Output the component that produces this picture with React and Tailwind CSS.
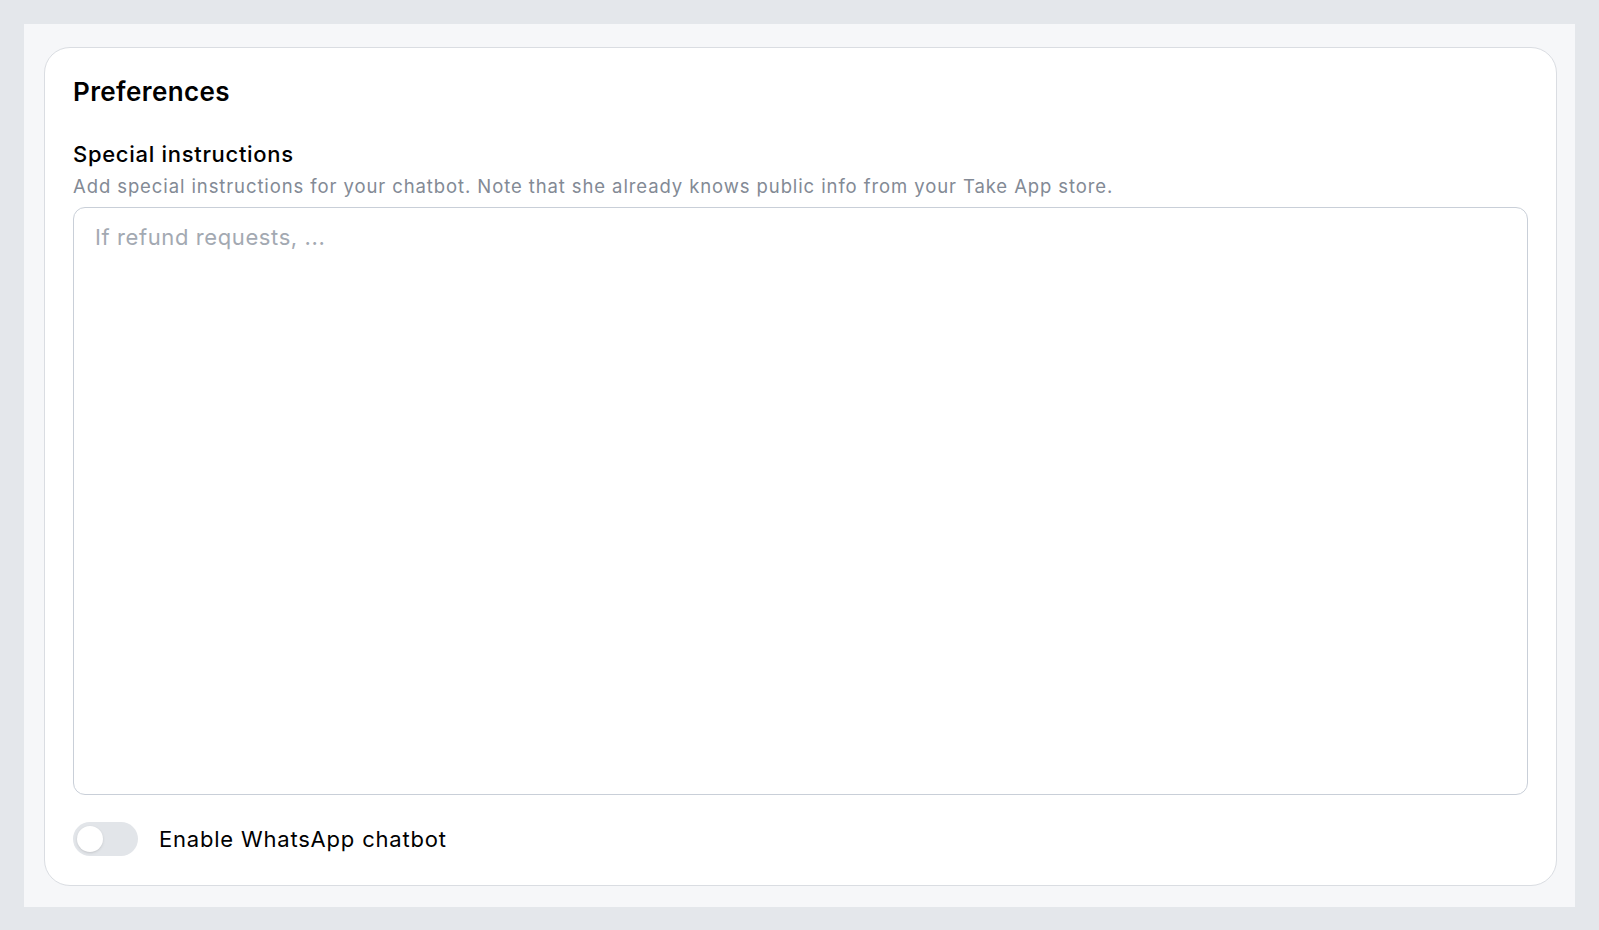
import { useState } from 'react';

function Toggle({ checked, onChange }) {
  return (
    <button
      type="button"
      role="switch"
      aria-checked={checked}
      onClick={() => onChange(!checked)}
      className={
        'relative inline-flex h-[34px] w-[65px] shrink-0 items-center rounded-full transition-colors ' +
        (checked ? 'bg-[#25d366]' : 'bg-[#e2e5e9]')
      }
    >
      <span
        className={
          'inline-block h-[26px] w-[26px] rounded-full bg-white shadow-sm transition-transform ' +
          (checked ? 'translate-x-[35px]' : 'translate-x-[4px]')
        }
      />
    </button>
  );
}

export default function App() {
  const [enabled, setEnabled] = useState(false);
  const [instructions, setInstructions] = useState('');

  return (
    <div className="min-h-screen bg-[#e4e7eb] p-6 font-['Inter',sans-serif]">
      <div className="bg-[#f6f7f9] pt-[23px] pb-[21px] pl-5 pr-[18px]">
        {/* Preferences card */}
        <section className="rounded-[26px] border border-[#dadde2] bg-white px-7 pt-[28px] pb-[29px]">
          <h2 className="text-[26px] font-semibold leading-[32px] tracking-[0.4px] text-black">Preferences</h2>

          <div className="mt-[31px]">
            <label className="block text-[22px] font-medium leading-[30px] tracking-[0.7px] text-black">
              Special instructions
            </label>
            <p className="mt-[5px] text-[18.5px] leading-[24px] tracking-[0.9px] text-[#838a95]">
              Add special instructions for your chatbot. Note that she already knows public info from your Take App store.
            </p>
            <textarea
              value={instructions}
              onChange={(e) => setInstructions(e.target.value)}
              placeholder="If refund requests, ..."
              className="mt-[9px] block h-[588px] w-full resize-none rounded-[12px] border border-[#c9cfd8] px-[21px] py-[14px] text-[22px] leading-[30px] tracking-[0.6px] text-black outline-none placeholder:text-[#a3a9b2]"
            />
          </div>

          <div className="mt-[27px] flex items-center gap-[21px]">
            <Toggle checked={enabled} onChange={setEnabled} />
            <span className="text-[22px] leading-[30px] tracking-[0.8px] text-black">Enable WhatsApp chatbot</span>
          </div>
        </section>
      </div>
    </div>
  );
}
